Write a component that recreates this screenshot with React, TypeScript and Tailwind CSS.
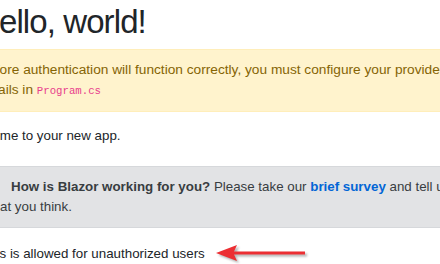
import React from "react";

export default function App() {
  return (
    <div className="w-[440px] h-[264px] overflow-hidden bg-white relative" style={{ fontFamily: '"Liberation Sans", Arial, sans-serif' }}>
      <div className="ml-[-37px] w-[560px] text-[13.33px] leading-[20px] text-[#212529]">
        <h1 className="ml-[13px] pt-[2px] text-[33px] leading-[40px] tracking-[-0.9px] font-normal text-[#212529] mb-[7px]">
          Hello, world!
        </h1>
        <div className="bg-[#fff3cd] border border-[#ffeeba] text-[#856404] text-[13.7px] pl-[15px] py-[10px] whitespace-nowrap">
          Before authentication will function correctly, you must configure your provider
          <br />
          details in{" "}
          <code className="text-[#e83e8c] text-[10.7px]" style={{ fontFamily: '"Liberation Mono", monospace' }}>
            Program.cs
          </code>
        </div>
        <p className="mt-[14px]">Welcome to your new app.</p>
        <div className="mt-[20px] bg-[#e2e3e5] border border-[#d6d8db] text-[#383d41] pl-[19px] py-[10px] whitespace-nowrap">
          <span className="inline-block w-[28px]"></span>
          <strong>How is Blazor working for you?</strong> Please take our{" "}
          <a className="font-bold text-[#0366d6]">brief survey</a> and tell us
          <br />
          what you think.
        </div>
        <div className="mt-[14px] ml-[18px] flex items-center">
          <span>This is allowed for unauthorized users</span>
          <svg width="100" height="24" viewBox="0 0 100 24" className="ml-[8px]">
            <defs>
              <filter id="sh" x="-20%" y="-50%" width="140%" height="200%">
                <feGaussianBlur stdDeviation="1.2" />
              </filter>
            </defs>
            <g transform="translate(2,2)" filter="url(#sh)" opacity="0.45">
              <polygon points="3,11 24,3 21,9.5 92,9.5 92,12.5 21,12.5 24,19" fill="#555" />
            </g>
            <polygon points="3,11 24,3 21,9.5 92,9.5 92,12.5 21,12.5 24,19" fill="#ec2f33" />
          </svg>
        </div>
      </div>
    </div>
  );
}
